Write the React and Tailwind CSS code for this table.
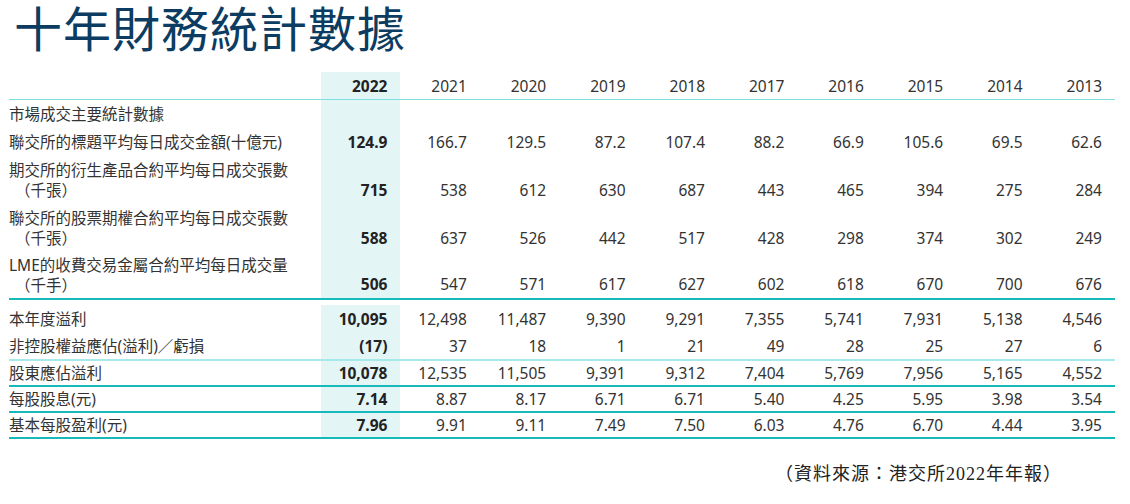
import React from 'react'

const years = ['2022', '2021', '2020', '2019', '2018', '2017', '2016', '2015', '2014', '2013']

const rows = [
  { label: ['市場成交主要統計數據'], values: null, h: 'h-[28px]' },
  { label: ['聯交所的標題平均每日成交金額(十億元)'], values: ['124.9', '166.7', '129.5', '87.2', '107.4', '88.2', '66.9', '105.6', '69.5', '62.6'], h: 'h-[28px]' },
  { label: ['期交所的衍生產品合約平均每日成交張數', '（千張）'], values: ['715', '538', '612', '630', '687', '443', '465', '394', '275', '284'], h: 'h-[48px]' },
  { label: ['聯交所的股票期權合約平均每日成交張數', '（千張）'], values: ['588', '637', '526', '442', '517', '428', '298', '374', '302', '249'], h: 'h-[48px]' },
  { label: ['LME的收費交易金屬合約平均每日成交量', '（千手）'], values: ['506', '547', '571', '617', '627', '602', '618', '670', '700', '676'], h: 'h-[48px]', line: 'border-b-2 border-[#17baba]' },
]

const rows2 = [
  { label: '本年度溢利', values: ['10,095', '12,498', '11,487', '9,390', '9,291', '7,355', '5,741', '7,931', '5,138', '4,546'], h: 'h-[28px]' },
  { label: '非控股權益應佔(溢利)／虧損', values: ['(17)', '37', '18', '1', '21', '49', '28', '25', '27', '6'], h: 'h-[28px]', line: 'border-b-2 border-[#a6e9ea]' },
  { label: '股東應佔溢利', values: ['10,078', '12,535', '11,505', '9,391', '9,312', '7,404', '5,769', '7,956', '5,165', '4,552'], h: 'h-[26px]', line: 'border-b-2 border-[#17baba]' },
  { label: '每股股息(元)', values: ['7.14', '8.87', '8.17', '6.71', '6.71', '5.40', '4.25', '5.95', '3.98', '3.54'], h: 'h-[26px]', line: 'border-b-2 border-[#17baba]' },
  { label: '基本每股盈利(元)', values: ['7.96', '9.91', '9.11', '7.49', '7.50', '6.03', '4.76', '6.70', '4.44', '3.95'], h: 'h-[26px]', line: 'border-b-2 border-[#17baba]' },
]

const grid = 'grid grid-cols-[312px_repeat(10,minmax(0,1fr))]'

function Cells({ values, multi }) {
  return years.map((y, i) => (
    <div
      key={y}
      className={`flex justify-end pr-[13px] ${multi ? 'items-end pb-[4px]' : 'items-center'} ${i === 0 ? 'bg-[#e4f5f6] font-bold text-[#222]' : ''}`}
    >
      {values ? values[i] : ''}
    </div>
  ))
}

export default function App() {
  return (
    <div className="w-[1130px] h-[504px] bg-white overflow-hidden text-[#333]">
      <h1 className="pl-[14px] text-[48px] leading-[52px] tracking-[1px] font-normal text-[#0c3c61] font-['Noto_Sans_CJK_TC',sans-serif]">
        十年財務統計數據
      </h1>

      <div className="ml-[9px] mt-[20px] w-[1106px] text-[15.5px] leading-[20px] font-['Noto_Sans','Noto_Sans_CJK_TC',sans-serif]">
        <div className={`${grid} h-[28px] border-b border-[#7fdfe0]`}>
          <div />
          {years.map((y, i) => (
            <div key={y} className={`flex items-center justify-end pr-[13px] ${i === 0 ? 'bg-[#e4f5f6] font-bold text-[#222]' : ''}`}>
              {y}
            </div>
          ))}
        </div>

        {rows.map((r) => {
          const multi = r.label.length > 1
          return (
            <div key={r.label[0]} className={`${grid} ${r.h} ${r.line || ''}`}>
              <div className="flex flex-col justify-center">
                <span>{r.label[0]}</span>
                {multi && <span className="pl-[6px]">{r.label[1]}</span>}
              </div>
              <Cells values={r.values} multi={multi} />
            </div>
          )
        })}

        <div className="h-[5px]" />

        {rows2.map((r) => (
          <div key={r.label} className={`${grid} ${r.h} ${r.line || ''}`}>
            <div className="flex items-center">{r.label}</div>
            <Cells values={r.values} />
          </div>
        ))}
      </div>

      <div className="flex justify-end pr-[68px] mt-[25px] text-[18px] leading-[20px] tracking-[1px] text-[#222] font-['Liberation_Serif','Noto_Sans_CJK_TC',serif]">
        （資料來源：港交所2022年年報）
      </div>
    </div>
  )
}
